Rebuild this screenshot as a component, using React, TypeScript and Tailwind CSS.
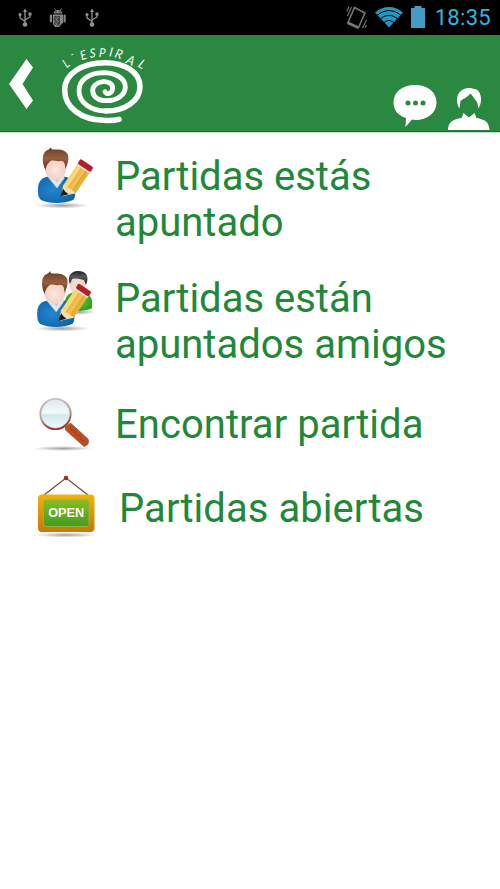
import React from 'react';

const UsbIcon: React.FC = () => (
  <svg className="w-[14px] h-[20px]" viewBox="0 0 14 20" fill="none" stroke="#929292" strokeWidth="1.3">
    <path d="M7 3v13M7 13.500 2 10V7M7 12l5-3V6" />
    <path d="M7 .5 9 4H5Z" fill="#929292" stroke="none" />
    <circle cx="7" cy="16.500" r="2.300" fill="#929292" stroke="none" />
    <circle cx="2" cy="6.500" r="1.500" fill="#929292" stroke="none" />
    <path d="M10.500 4.500h3v3h-3z" fill="#929292" stroke="none" />
  </svg>
);

const DebugIcon: React.FC = () => (
  <svg className="w-[18px] h-[20px]" viewBox="0 0 18 20" fill="#858585">
    <path d="M4.500 5.500C4.600 3.200 6.500 2 9 2s4.200 1.200 4.500 3.500Z" />
    <path d="m5.500.5 1.500 2M12.500.5 11 2.500" stroke="#858585" />
    <rect x=".8" y="6.500" width="2.200" height="8" rx="1" />
    <rect x="14.500" y="6.500" width="2.200" height="8" rx="1" />
    <path d="M4 6.500h10v8l-4 4.500H6l-2-3Z" />
    <path d="M5 8h6v8l-2 2-4-2Z" fill="#3b3b3b" />
    <path d="m5 9 5 5M10 9l-5 5M5 14l4 3M8 8v9" stroke="#858585" strokeWidth=".7" />
    <circle cx="7" cy="4" r=".6" fill="#000" />
    <circle cx="11" cy="4" r=".6" fill="#000" />
  </svg>
);

const StatusBar: React.FC = () => (
  <div className="h-[35px] bg-black flex items-center justify-between pl-[18px] pr-[9px]">
    <div className="flex items-center">
      <UsbIcon />
      <div className="ml-[17px] mr-[18px]"><DebugIcon /></div>
      <UsbIcon />
    </div>
    <div className="flex items-center">
      <svg className="w-[22px] h-[24px]" viewBox="0 0 22 24" fill="none" stroke="#777">
        <path d="M8.500 1.500 19 7 12.500 21.500 2 16.500Z" strokeWidth="1.600" />
        <path d="m2 15.500 11 5-1 2.500-11-5Z" fill="#777" stroke="none" />
        <path d="M5.500 1 1.500 10M3 .5.8 5.500M20.500 14l-4 8M20.500 19l-1.500 3" strokeWidth="1.100" />
      </svg>
      <svg className="w-[28px] h-[22px] ml-[7px] -mt-px" viewBox="0 0 28 22">
        <path d="M14 21.500 0 6.500C8-1 20-1 28 6.500Z" fill="#2795bf" />
        <path d="M2 9.500c7-6.500 17-6.500 24 0M5.500 13c5-4.800 12-4.800 17 0M9 16.700c3-2.800 7-2.800 10 0" fill="none" stroke="#000" strokeWidth="1" />
      </svg>
      <svg className="w-[14px] h-[22px] ml-[8px] -mt-px" viewBox="0 0 14 22" fill="#429cc4">
        <path d="M3.500 0h7v2H14v20H0V2h3.500Z" />
      </svg>
      <span className="ml-[10px] mt-px font-[Roboto] text-[22px] leading-none tracking-[0.300px] text-[#33b5e5]">18:35</span>
    </div>
  </div>
);

const SpiralLogo: React.FC = () => (
  <svg className="w-[90px] h-[86px]" viewBox="180 12 270 258">
    <g fill="none" stroke="#fff" strokeLinecap="round">
      <path
        d="M315 173C319 184 337 179 338 163C338 147 323 142 309 143C291 145 277 156 278 171C279 190 297 200 318 200C350 201 376 183 376 159C376 131 344 116 309 116C267 117 237 138 237 170C237 207 275 231 318 231"
        strokeWidth="14.500"
      />
      <path d="M318 231C374 231 420 201 420 158C420 113 372 86 315 86C246 86 194 120 194 168C194 221 244 257 310 259C332 260 346 259 357 256" strokeWidth="16.500" />
    </g>
    <g fill="#fff" fontFamily="Lato" fontStyle="italic" fontSize="38">
      <text transform="translate(200 103) rotate(-38) scale(.8 1)">L</text>
      <text transform="translate(216 72) rotate(-28)" fontSize="30">-</text>
      <text transform="translate(245 79) rotate(-18) scale(.9 1)">E</text>
      <text transform="translate(270 71) rotate(-4) scale(.9 1)">S</text>
      <text transform="translate(296 69) rotate(4) scale(.9 1)">P</text>
      <text transform="translate(326 67) rotate(8)">I</text>
      <text transform="translate(342 69) rotate(18)">R</text>
      <text transform="translate(376 86) rotate(24)">A</text>
      <text transform="translate(412 97) rotate(32)">L</text>
    </g>
  </svg>
);

const Header: React.FC = () => (
  <header className="h-[97px] bg-[#2b8840] border-b border-[#077f12] flex justify-between">
    <div className="flex">
      <svg className="w-[24px] h-[50px] mt-[24px] ml-[9px]" viewBox="0 0 24 50" fill="#fff">
        <path d="M17.500 0 24 8.500 13.500 25 24 41.500 17.500 50 0 25Z" />
      </svg>
      <div className="mt-[3px] ml-[27px]"><SpiralLogo /></div>
    </div>
    <div className="flex items-end pr-[10px]">
      <svg className="w-[44px] h-[42px] mr-[11px] mb-[4px]" viewBox="0 0 44 42">
        <path d="M22 0C34.500 0 43.500 7 43.500 17.500S34 35 22.500 35L19 34.500 12.500 42 13 33C5 30.500.5 25 .5 17.500.5 7 9.500 0 22 0Z" fill="#fff" />
        <g fill="#2b8840">
          <circle cx="15" cy="18" r="2.500" />
          <circle cx="22.500" cy="18" r="2.500" />
          <circle cx="30" cy="18" r="2.500" />
        </g>
      </svg>
      <svg className="w-[42px] h-[42px] mb-[1px]" viewBox="0 0 42 42" fill="#fff">
        <path d="M11.500 20.500C8.500 16 8 9 11 5 14 1 18 0 21 0c2 0 4 .5 5 1 3-.5 5 2 6 5 2 5 1 10-1.500 14.500L29 14 22.500 5.500C20 9 15 10.500 12.500 13Z" />
        <path d="M15.500 25 21 29.500 26.500 25 28.500 30C37 31.500 41 34 41.500 42H0C0 34 5 31 13.500 30Z" />
      </svg>
    </div>
  </header>
);

const IconDefs: React.FC = () => (
  <svg className="absolute w-0 h-0">
    <defs>
      <linearGradient id="hair" x1="0" y1="0" x2="0" y2="1">
        <stop offset="0" stopColor="#6b3d26" />
        <stop offset=".5" stopColor="#96603f" />
        <stop offset="1" stopColor="#5a2f1b" />
      </linearGradient>
      <linearGradient id="hairDark" x1="0" y1="0" x2="0" y2="1">
        <stop offset="0" stopColor="#222" />
        <stop offset=".4" stopColor="#555" />
        <stop offset="1" stopColor="#1c1c1c" />
      </linearGradient>
      <radialGradient id="skin" cx=".5" cy=".6" r=".6">
        <stop offset="0" stopColor="#fde6de" />
        <stop offset="1" stopColor="#f3c8bb" />
      </radialGradient>
      <radialGradient id="blueShirt" cx=".4" cy=".5" r=".65">
        <stop offset="0" stopColor="#2686cf" />
        <stop offset="1" stopColor="#0962a8" />
      </radialGradient>
      <radialGradient id="greenShirt">
        <stop offset="0" stopColor="#62ce3d" />
        <stop offset="1" stopColor="#2fa31c" />
      </radialGradient>
      <linearGradient id="pencil">
        <stop offset="0" stopColor="#f7d476" />
        <stop offset=".3" stopColor="#f9da7a" />
        <stop offset=".34" stopColor="#e9b545" />
        <stop offset=".65" stopColor="#f4c650" />
        <stop offset=".69" stopColor="#e2a635" />
        <stop offset="1" stopColor="#eab844" />
      </linearGradient>
      <radialGradient id="shadow">
        <stop offset="0" stopColor="#000" stopOpacity=".38" />
        <stop offset="1" stopColor="#000" stopOpacity="0" />
      </radialGradient>
      <linearGradient id="lens" x1="0" y1="0" x2="0" y2="1">
        <stop offset="0" stopColor="#c8dce5" />
        <stop offset=".45" stopColor="#edf7fa" />
        <stop offset=".55" stopColor="#cfe8f0" />
        <stop offset="1" stopColor="#f6fdff" />
      </linearGradient>
      <linearGradient id="rim" x1="0" y1="0" x2=".3" y2="1">
        <stop offset="0" stopColor="#c5c9cc" />
        <stop offset=".6" stopColor="#b9a09c" />
        <stop offset="1" stopColor="#8b3c31" />
      </linearGradient>
      <linearGradient id="gold" x1="0" y1="0" x2="0" y2="1">
        <stop offset="0" stopColor="#efb30c" />
        <stop offset="1" stopColor="#c57a04" />
      </linearGradient>
      <linearGradient id="board" x1="0" y1="0" x2="0" y2="1">
        <stop offset="0" stopColor="#86bd20" />
        <stop offset="1" stopColor="#459c1c" />
      </linearGradient>
    </defs>
  </svg>
);

const Man: React.FC = () => (
  <>
    <path d="M13 49c0-8 4-12 12-12.500h13c7 .5 11 4.500 12 12.500.5 6 0 9-2 11-9 4-24 4-32 0-3-3-3-6-3-11Z" fill="url(#blueShirt)" />
    <path d="m23 37 9 11 7-9 1-4H25Z" fill="#dcebf2" />
    <path d="m26.500 34 5.500 9 5.500-9Z" fill="#f0bdac" />
    <path d="m23 37 9 11 7-10" fill="none" stroke="#a9c4d4" />
    <ellipse cx="30.500" cy="27.500" rx="10.800" ry="12.200" fill="url(#skin)" />
    <path d="M20.500 30C16.500 22 17 13 21.500 10.500 24 9.500 25 8.500 26 7c0 2 1 2.500 3 2.500 6-.5 11.500.5 13.500 4.500 2 4 .5 9-2 15-.5-5-1-8-4-8-5 .5-7-.5-10-.5-3 2-5 4-6 9.500Z" fill="url(#hair)" />
  </>
);

const Pencil: React.FC = () => (
  <g transform="translate(59.500 27) rotate(34) scale(1.150 1.020)">
    <path d="M-6.500 2h13v24L-3 35l-3.500-8Z" fill="url(#pencil)" />
    <path d="m-6.500 25 4 1.500 4-1 5 .5L-2 36Z" fill="#f3dcae" />
    <path d="m-4.800 29.500 3 1 3.600.500L-3 37Z" fill="#1b1b1b" />
    <rect x="-6.800" y="-.5" width="13.600" height="3.200" fill="#eadfd8" />
    <rect x="-6.800" y="-4.500" width="13.600" height="5.500" rx="1.500" fill="#b51e27" />
  </g>
);

const PlayerIcon: React.FC = () => (
  <svg className="w-[80px] h-[75px]" viewBox="0 0 80 75">
    <ellipse cx="37" cy="65.500" rx="27" ry="3" fill="url(#shadow)" />
    <Man />
    <Pencil />
  </svg>
);

const FriendsIcon: React.FC = () => (
  <svg className="w-[80px] h-[75px]" viewBox="0 0 80 75">
    <ellipse cx="54" cy="50" rx="16" ry="3" fill="url(#shadow)" />
    <ellipse cx="37" cy="66.500" rx="27" ry="3" fill="url(#shadow)" />
    <path d="M40 38c2-6 6-8 13-8s13 2 14 9v7c-1 2-19 5-27 1Z" fill="url(#greenShirt)" />
    <ellipse cx="52.500" cy="22" rx="8" ry="10" fill="url(#skin)" />
    <path d="M45 22c-3-7 0-12 7-13 8-.5 12 4 10 11l-1 3-2-5c-4-1-8-2-12-1Z" fill="url(#hairDark)" />
    <g transform="translate(-.8 2)"><Man /></g>
    <g transform="translate(-2 2.500)"><Pencil /></g>
  </svg>
);

const SearchIcon: React.FC = () => (
  <svg className="w-[80px] h-[65px]" viewBox="0 0 80 65">
    <ellipse cx="38" cy="58.500" rx="29" ry="2.500" fill="url(#shadow)" />
    <path d="m40.500 37 5-4L63 49c1.500 3 0 6.500-4 7.500L40.500 40Z" fill="#bd4e22" stroke="#9a3614" strokeWidth=".6" />
    <path d="m45 36 1 4 4 1 1 4 4 1 1 4 4 1" fill="none" stroke="#9a3814" strokeWidth=".8" />
    <circle cx="30.500" cy="24" r="15" fill="url(#lens)" stroke="url(#rim)" strokeWidth="2.200" />
    <circle cx="30.500" cy="24" r="14" fill="none" stroke="#f7eeee" strokeWidth=".6" />
    <path d="M17.500 23c7 3 16-3 26-1-1-7-6-11.500-13-11.500S18 16 17.500 23Z" fill="#fff" opacity=".35" />
  </svg>
);

const OpenIcon: React.FC = () => (
  <svg className="w-[80px] h-[75px]" viewBox="0 0 80 75">
    <ellipse cx="41" cy="65" rx="31" ry="2.500" fill="url(#shadow)" />
    <path d="M19 25 41 8l22 17" fill="none" stroke="#79453a" strokeWidth="1.200" />
    <circle cx="41" cy="8" r="2.300" fill="#a62d17" />
    <rect x="13" y="24.500" width="56.500" height="37.500" rx="4" fill="url(#gold)" />
    <rect x="18.500" y="30" width="45.500" height="26.500" rx="3" fill="url(#board)" stroke="#8fb548" />
    <text x="41.200" y="47.300" textAnchor="middle" fill="#fff" fontFamily="Liberation Sans" fontWeight="700" fontSize="12.500" textLength="36" lengthAdjust="spacingAndGlyphs">OPEN</text>
  </svg>
);

const App: React.FC = () => {
  return (
    <div className="w-[500px] h-[889px] bg-white overflow-hidden font-[Roboto]">
      <IconDefs />
      <StatusBar />
      <Header />
      <main className="border-t border-[#c5e0c8] pl-[25px] text-[40px] leading-[46px] text-[#218739]">
        <div className="flex h-[122px] pt-[7px]">
          <PlayerIcon />
          <p className="ml-[10px] mt-[14px]">Partidas estás<br />apuntado</p>
        </div>
        <div className="flex h-[128px] pt-[7px]">
          <FriendsIcon />
          <p className="ml-[10px] mt-[14px]">Partidas están<br />apuntados amigos</p>
        </div>
        <div className="flex h-[80px] pt-[7px]">
          <SearchIcon />
          <p className="ml-[10px] mt-[12px] tracking-[0.050px]">Encontrar partida</p>
        </div>
        <div className="flex h-[83px] pt-[7px]">
          <OpenIcon />
          <p className="ml-[14px] mt-[16px] tracking-[0.050px]">Partidas abiertas</p>
        </div>
      </main>
    </div>
  );
};

export default App;
